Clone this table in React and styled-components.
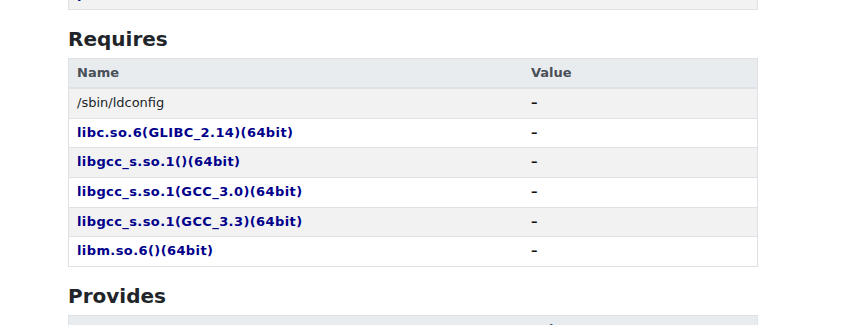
import React from 'react';
import styled, { createGlobalStyle } from 'styled-components';

const GlobalStyle = createGlobalStyle`
    body {
        margin: 0;
        background: #fff;
        font-family: "DejaVu Sans", Verdana, sans-serif;
        font-size: 13px;
        color: #212529;
    }
`

const Page = styled.div`
    width: 690px;
    margin: -21px 0 0 68px;
`

const Heading = styled.h2`
    margin: 17px 0 7px;
    font-size: 20px;
    line-height: 24px;
    font-weight: bold;
    color: #212529;
`

const Table = styled.table`
    width: 100%;
    border-collapse: collapse;
    border: 1px solid #dee2e6;
    th, td {
        padding: 5px 8px;
        line-height: 18.6px;
        text-align: left;
        vertical-align: top;
    }
    th {
        background: #e9ecef;
        color: #495057;
        font-weight: bold;
        border-bottom: 2px solid #dee2e6;
    }
    td {
        border-top: 1px solid #dee2e6;
    }
    tbody tr:nth-child(odd) td {
        background: #f2f2f2;
    }
    th:first-child, td:first-child {
        width: 438px;
    }
`

const Link = styled.a`
    color: #00008b;
    font-weight: bold;
    letter-spacing: 0.4px;
    text-decoration: none;
`

const Dash = styled.span`
    color: #111;
    font-weight: bold;
`

const requires = [
    { name: '/sbin/ldconfig', link: false },
    { name: 'libc.so.6(GLIBC_2.14)(64bit)', link: true },
    { name: 'libgcc_s.so.1()(64bit)', link: true },
    { name: 'libgcc_s.so.1(GCC_3.0)(64bit)', link: true },
    { name: 'libgcc_s.so.1(GCC_3.3)(64bit)', link: true },
    { name: 'libm.so.6()(64bit)', link: true },
]

const Row = ({ item }) => (
    <tr>
        <td>{item.link ? <Link href="#">{item.name}</Link> : item.name}</td>
        <td><Dash>–</Dash></td>
    </tr>
)

const App = () => (
    <>
        <GlobalStyle />
        <Page>
            <Table>
                <tbody>
                    <tr>
                        <td><Link href="#">perl</Link></td>
                        <td></td>
                    </tr>
                </tbody>
            </Table>

            <Heading>Requires</Heading>
            <Table>
                <thead>
                    <tr>
                        <th>Name</th>
                        <th>Value</th>
                    </tr>
                </thead>
                <tbody>
                    {requires.map((item) => <Row key={item.name} item={item} />)}
                </tbody>
            </Table>

            <Heading>Provides</Heading>
            <Table>
                <thead>
                    <tr>
                        <th>Name</th>
                        <th>Value</th>
                    </tr>
                </thead>
            </Table>
        </Page>
    </>
)

export default App;
